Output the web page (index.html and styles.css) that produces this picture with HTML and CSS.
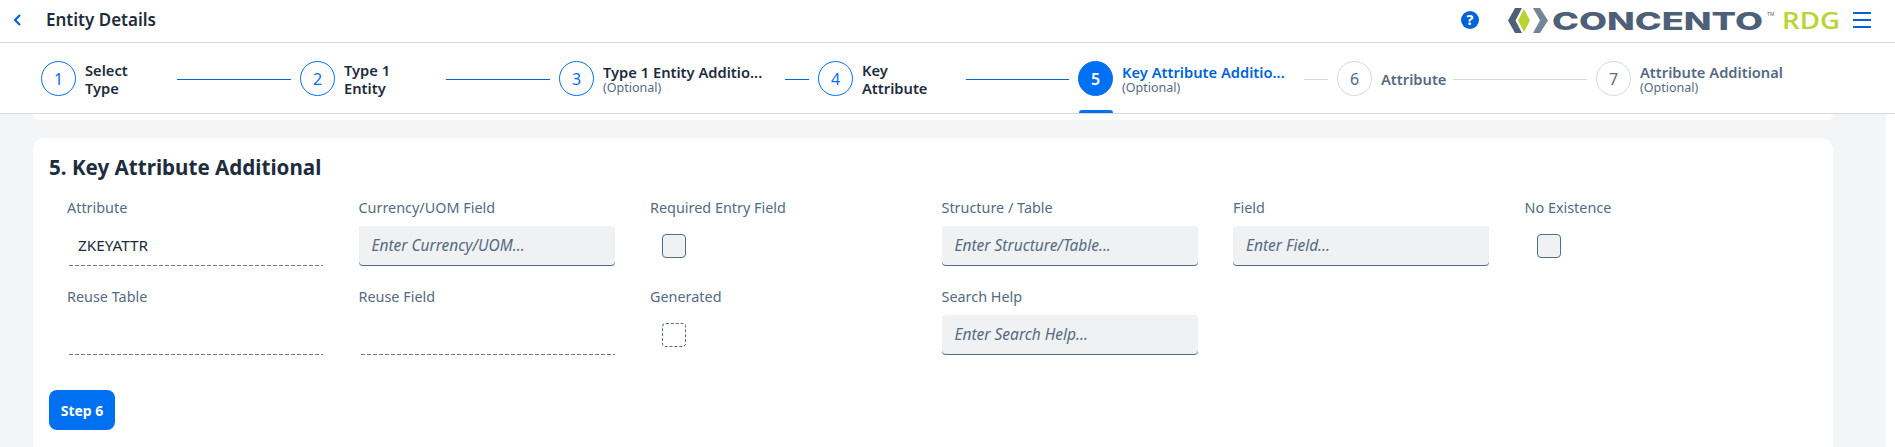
FILE: index.html
```html
<!DOCTYPE html>
<html lang="en">
<head>
<meta charset="utf-8">
<title>Entity Details</title>
<link rel="stylesheet" href="styles.css">
</head>
<body>
<div class="page">
  <header class="topbar">
    <a class="back" aria-label="Back">
      <svg width="9" height="12" viewBox="0 0 9 12"><path d="M7 1 2 6l5 5" fill="none" stroke="#0064d9" stroke-width="2.2"/></svg>
    </a>
    <h1 class="page-title">Entity Details</h1>
    <span class="help">?</span>
    <svg class="logo" width="334" height="28" viewBox="0 0 334 28">
      <polygon points="0,12.5 7,0 14,0 7.5,12.5 14,25 7,25" fill="#4e6078"/>
      <polygon points="10,12.5 16,1 22,12.5 16,24" fill="#b9d433"/>
      <polygon points="25,0 32,0 40,12.5 32,25 25,25 32,12.5" fill="#74859a"/>
      <text class="logo-word" x="44" y="22" textLength="211" lengthAdjust="spacingAndGlyphs">CONCENTO</text>
      <text class="logo-tm" x="259" y="8">TM</text>
      <text class="logo-rdg" x="274" y="21" textLength="58" lengthAdjust="spacingAndGlyphs">RDG</text>
    </svg>
    <span class="menu" aria-label="Menu"><i></i><i></i><i></i></span>
  </header>

  <nav class="stepper">
    <div class="step done"><span class="num">1</span><span class="step-label w1"><b>Select<br>Type</b></span></div>
    <span class="line on l1"></span>
    <div class="step done"><span class="num">2</span><span class="step-label w2"><b>Type 1<br>Entity</b></span></div>
    <span class="line on l2"></span>
    <div class="step done"><span class="num">3</span><span class="step-label w3"><b class="one">Type 1 Entity Additio...</b><small>(Optional)</small></span></div>
    <span class="line on l3"></span>
    <div class="step done"><span class="num">4</span><span class="step-label w4"><b>Key<br>Attribute</b></span></div>
    <span class="line on l4"></span>
    <div class="step current"><span class="num">5</span><span class="step-label w3"><b class="one">Key Attribute Additio...</b><small>(Optional)</small></span></div>
    <span class="line l5"></span>
    <div class="step todo"><span class="num">6</span><span class="step-label w6"><b class="one">Attribute</b></span></div>
    <span class="line l6"></span>
    <div class="step todo"><span class="num">7</span><span class="step-label"><b class="one">Attribute Additional</b><small>(Optional)</small></span></div>
  </nav>

  <main class="content">
    <div class="prev-card"></div>
    <section class="card">
      <h2 class="card-title">5. Key Attribute Additional</h2>
      <div class="form">
        <div class="field"><label>Attribute</label><div class="readonly">ZKEYATTR</div></div>
        <div class="field"><label>Currency/UOM Field</label><div class="input">Enter Currency/UOM...</div></div>
        <div class="field"><label>Required Entry Field</label><div class="check-wrap"><span class="check"></span></div></div>
        <div class="field"><label>Structure / Table</label><div class="input">Enter Structure/Table...</div></div>
        <div class="field"><label>Field</label><div class="input">Enter Field...</div></div>
        <div class="field"><label>No Existence</label><div class="check-wrap"><span class="check"></span></div></div>
        <div class="field"><label>Reuse Table</label><div class="readonly"></div></div>
        <div class="field"><label>Reuse Field</label><div class="readonly"></div></div>
        <div class="field"><label>Generated</label><div class="check-wrap"><span class="check dashed"></span></div></div>
        <div class="field"><label>Search Help</label><div class="input">Enter Search Help...</div></div>
      </div>
      <button class="primary">Step 6</button>
    </section>
  </main>
</div>
</body>
</html>
```

FILE: styles.css
```css
* { box-sizing: border-box; }
html, body { margin: 0; height: 100%; background: #fff; }
body { font-family: "Noto Sans", "Liberation Sans", sans-serif; color: #1d2d3e; overflow: hidden; }
.page { height: 447px; display: flex; flex-direction: column; }

.topbar { height: 43px; background: #fff; border-bottom: 1px solid #d9d9d9; display: flex; align-items: center; padding: 0 0 3px 13px; flex: none; }
.back { display: flex; width: 33px; }
.page-title { margin: 0; font-size: 17px; font-weight: 600; flex: 1; }
.help { width: 18px; height: 18px; border-radius: 50%; background: #0064d9; color: #fff; font-size: 14px; font-weight: 800; line-height: 18px; text-align: center; margin-right: 29px; }
.logo { flex: none; margin-right: 11px; margin-top: 5px; overflow: visible; }
.logo-word { font: 800 24px "Inter", sans-serif; fill: #4e6078; }
.logo-tm { font: 400 5px "Liberation Sans", sans-serif; fill: #4e6078; }
.logo-rdg { font: 600 24px "Open Sans", sans-serif; fill: #b9d433; }
.menu { width: 18px; display: flex; flex-direction: column; gap: 5px; margin-right: 24px; }
.menu i { display: block; height: 2px; background: #0064d9; }

.stepper { height: 71px; background: #fff; border-bottom: 1px solid #d9d9d9; display: flex; align-items: flex-start; padding: 18px 0 0 41px; gap: 9px; flex: none; position: relative; z-index: 1; }
.step { display: flex; gap: 9px; align-items: center; height: 35px; position: relative; flex: none; }
.num { width: 35px; height: 35px; border-radius: 50%; border: 1px solid #0070f2; color: #0070f2; background: #fff; font-size: 16px; display: flex; align-items: center; justify-content: center; flex: none; }
.step-label { display: flex; flex-direction: column; font-size: 14.7px; line-height: 18px; }
.step-label b { font-weight: 600; }
.step-label b.one { white-space: nowrap; line-height: 18px; }
.step-label small { font-size: 12.5px; line-height: 14px; color: #556b82; }
.w1 { width: 83px; }
.w2 { width: 93px; }
.w3 { width: 173px; }
.w4 { width: 95px; }
.w6 { width: 63px; }
.line { height: 1px; margin-top: 18px; background: #d9d9d9; flex: none; }
.line.on { background: #0064d9; }
.l1 { width: 114px; }
.l2 { width: 104px; }
.l3 { width: 24px; }
.l4 { width: 103px; }
.l5 { width: 24px; }
.l6 { width: 134px; }
.current .num { background: #0070f2; color: #fff; font-weight: 600; }
.current b { color: #0064d9; }
.current::after { content: ""; position: absolute; left: 1px; bottom: -17px; width: 34px; height: 3px; background: #0070f2; border-radius: 3px 3px 0 0; }
.todo .num { border-color: #d9d9d9; color: #556b82; }
.todo b { color: #556b82; }

.content { flex: 1; width: 1886px; background: #f4f5f6; padding: 0 53px 0 33px; min-height: 0; }
.prev-card { height: 6px; background: #fff; border-radius: 0 0 12px 12px; }
.card { background: #fff; border-radius: 12px 12px 0 0; margin-top: 18px; height: 310px; padding: 16px 0 0 16px; }
.card-title { margin: 0; font-size: 20.6px; font-weight: 700; line-height: 26px; }
.form { display: grid; grid-template-columns: repeat(6, 291.5px); grid-auto-rows: 89px; margin: 19px 0 0 18px; }
.field { display: flex; flex-direction: column; }
.field label { font-size: 14.4px; line-height: 18px; color: #556b82; height: 27px; }
.readonly { height: 40px; width: 254px; margin-left: 2px; background: repeating-linear-gradient(90deg, #6a7d92 0 4px, transparent 4px 6px) bottom / 100% 1px no-repeat; font-size: 15.3px; line-height: 39px; padding-left: 9px; color: #1d2d3e; }
.input { height: 40px; width: 256px; background: #eff1f2; border-radius: 4px; box-shadow: inset 0 -1px 0 #556b82; padding-left: 13px; font-size: 15.5px; font-style: italic; line-height: 39px; color: #556b82; }
.check-wrap { height: 40px; display: flex; align-items: center; padding-left: 12px; }
.check { width: 24px; height: 24px; border: 1px solid #556b82; border-radius: 4px; background: #eff1f2; }
.check.dashed { border-style: dashed; background: #fff; }
.primary { display: block; margin-top: 13px; width: 66px; height: 40px; border: 0; border-radius: 8px; background: #0070f2; color: #fff; font: 700 14px "Noto Sans", sans-serif; }
```
